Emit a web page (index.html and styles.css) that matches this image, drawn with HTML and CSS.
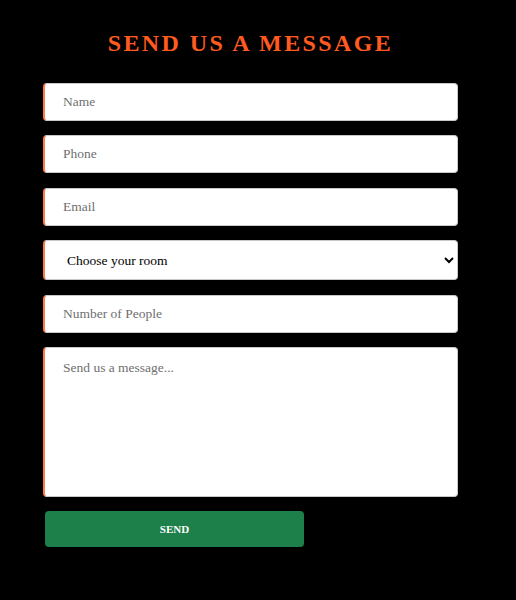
FILE: index.html
```html
<!DOCTYPE html>
<html lang="en">
<head>
<meta charset="utf-8">
<link rel="stylesheet" href="styles.css">
</head>
<body>
<section class="contact">
  <h2 class="title">SEND US A MESSAGE</h2>
  <form class="form">
    <input class="field" type="text" placeholder="Name">
    <input class="field" type="text" placeholder="Phone">
    <input class="field" type="text" placeholder="Email">
    <select class="field select">
      <option>Choose your room</option>
    </select>
    <input class="field" type="text" placeholder="Number of People">
    <textarea class="field message" placeholder="Send us a message..."></textarea>
    <button class="send" type="button">SEND</button>
  </form>
</section>
</body>
</html>
```
FILE: styles.css
```css
html, body {
  margin: 0;
  padding: 0;
  background: #000;
}
body {
  font-family: "Liberation Serif", "DejaVu Serif", serif;
  width: 516px;
  height: 600px;
}
.contact {
  padding: 30px 58px 0 43px;
}
.title {
  margin: 0 0 27px;
  text-align: center;
  color: #ff5a1f;
  font-size: 24px;
  font-weight: bold;
  letter-spacing: 2.4px;
  line-height: 26px;
}
.form {
  display: flex;
  flex-direction: column;
  gap: 14.4px;
}
.field {
  box-sizing: border-box;
  width: 415px;
  height: 38px;
  margin: 0;
  padding: 0 18px;
  border: 1px solid #c8c8c8;
  border-left: 2px solid #ff7a45;
  border-radius: 4px;
  background: #fff;
  font-family: "Liberation Serif", "DejaVu Serif", serif;
  font-size: 13.5px;
  color: #222;
  outline: none;
}
.field::placeholder {
  color: #6f6f6f;
}
.select {
  height: 40px;
  padding-left: 18px;
  color: #000;
}
.message {
  height: 150px;
  padding-top: 12px;
  resize: none;
}
.send {
  margin-left: 2px;
  width: 259px;
  height: 36px;
  border: none;
  border-radius: 4px;
  background: #1d7f49;
  color: #fff;
  font-family: "Liberation Serif", "DejaVu Serif", serif;
  font-weight: bold;
  font-size: 11px;
  cursor: pointer;
}
```
